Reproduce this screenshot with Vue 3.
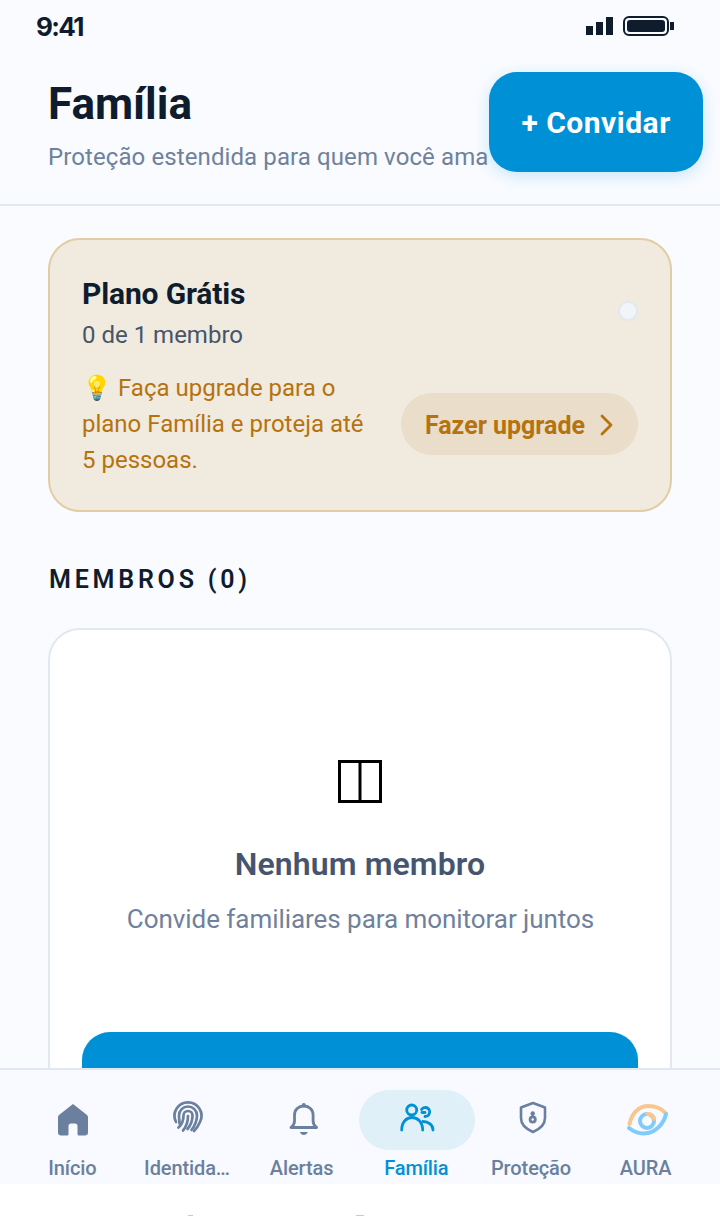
<script setup>
const navItems = [
  { label: "Início", icon: "home" },
  { label: "Identida…", icon: "finger" },
  { label: "Alertas", icon: "bell" },
  { label: "Família", icon: "family", active: true },
  { label: "Proteção", icon: "shield" },
  { label: "AURA", icon: "aura" },
];
</script>

<template>
  <div class="screen">
    <div class="phone">
      <div class="status-bar">
        <span class="clock">9:41</span>
        <div class="status-icons">
          <svg width="28" height="18" viewBox="0 0 28 18" fill="#0f1c2e">
            <rect x="0" y="9" width="7" height="9" />
            <rect x="10" y="5" width="7" height="13" />
            <rect x="20" y="0" width="7" height="18" />
          </svg>
          <svg width="52" height="20" viewBox="0 0 52 20">
            <rect x="1" y="1" width="44" height="18" rx="5" fill="none" stroke="#0f1c2e" stroke-width="2" />
            <rect x="4" y="4" width="38" height="12" rx="3" fill="#0f1c2e" />
            <rect x="47" y="6" width="4" height="8" fill="#0f1c2e" />
          </svg>
        </div>
      </div>

      <header class="page-header">
        <div class="heading">
          <h1>Família</h1>
          <p>Proteção estendida para quem você ama</p>
        </div>
        <button type="button" class="invite">+ Convidar</button>
      </header>

      <main class="content">
        <section class="plan-card">
          <div class="plan-top">
            <div>
              <h2>Plano Grátis</h2>
              <p class="plan-count">0 de 1 membro</p>
            </div>
            <span class="plan-dot"></span>
          </div>
          <div class="plan-bottom">
            <p class="plan-hint">💡 Faça upgrade para o plano Família e proteja até 5 pessoas.</p>
            <button type="button" class="upgrade">
              Fazer upgrade
              <svg width="14" height="22" viewBox="0 0 14 22" fill="none" stroke="#b5730f" stroke-width="2.8" stroke-linecap="round" stroke-linejoin="round">
                <path d="M2 2l9 9-9 9" />
              </svg>
            </button>
          </div>
        </section>

        <h3 class="section-title">MEMBROS (0)</h3>

        <section class="empty-card">
          <svg class="tofu" width="44" height="43" viewBox="0 0 44 43" fill="none" stroke="#000" stroke-width="3">
            <rect x="1.5" y="1.5" width="41" height="40" />
            <path d="M22 1.5v40" />
          </svg>
          <h4>Nenhum membro</h4>
          <p>Convide familiares para monitorar juntos</p>
          <button type="button" class="cta"></button>
        </section>
      </main>

      <nav class="tab-bar">
        <div v-for="item in navItems" :key="item.label" class="tab" :class="{ active: item.active }">
          <span class="tab-icon">
            <svg v-if="item.icon === 'home'" width="36" height="36" viewBox="0 2 36 36" fill="#6b7f9e">
              <path d="M18 4 4 15c-.6.5-1 1.200-1 2v15.500c0 1.700 1.300 3 3 3h6c1 0 1.500-.7 1.500-1.500v-8c0-1.400 1-2.500 2.500-2.500h4c1.500 0 2.500 1.100 2.500 2.500v8c0 .8.500 1.500 1.500 1.500h6c1.700 0 3-1.300 3-3V17c0-.8-.4-1.500-1-2z" />
            </svg>
            <svg v-else-if="item.icon === 'finger'" width="36" height="36" viewBox="0 2 36 36" fill="none" stroke="#6b7f9e" stroke-width="2.700" stroke-linecap="round">
              <path d="M6 22A13.500 13.500 0 1 1 30 22c-1.500 3.500-3.500 6.500-6 9" />
              <path d="M9.500 23.500c0-2.500-.5-5-.5-8C9 10.500 13 6.500 18 6.500s9 4 9 9c0 4-2 10-5.500 14.500" />
              <path d="M8.500 27.500c3.500-3 5-7 5-12 0-2.500 2-4.500 4.500-4.500s4.500 2 4.500 4.500c0 5-2 10-5 13.500" />
              <path d="M13 30.500c3-3.500 5-8.500 5-14.500" />
            </svg>
            <svg v-else-if="item.icon === 'bell'" width="36" height="36" viewBox="0 2 36 36" fill="none" stroke="#6b7f9e" stroke-width="2.800" stroke-linecap="round" stroke-linejoin="round">
              <path d="M6 27.500c2.200-1.500 3.500-3 3.500-6.500v-6c0-5.500 4-9 9.300-9s9.300 3.500 9.300 9v6c0 3.500 1.300 5 3.500 6.500z" />
              <circle cx="18.800" cy="5" r="2" fill="#6b7f9e" stroke="none" />
              <path d="M14.800 32h8c-.8 2-2.300 3-4 3s-3.200-1-4-3z" fill="#6b7f9e" stroke="none" />
            </svg>
            <svg v-else-if="item.icon === 'family'" width="36" height="36" viewBox="0 2 36 36" fill="none" stroke="#0090d6" stroke-width="2.800" stroke-linecap="round">
              <circle cx="12.700" cy="10" r="5" />
              <path d="M22.500 9.500A4.500 4.500 0 1 1 26 16.500" />
              <path d="M23 12.500h3" />
              <path d="M2.700 30C2.700 22 7.500 17.500 13 17.500S23.700 22 23.700 30" />
              <path d="M24 21.500C29.500 21.500 34 25 34 30" />
            </svg>
            <svg v-else-if="item.icon === 'shield'" width="36" height="36" viewBox="0 2 36 36" fill="none" stroke="#6b7f9e" stroke-width="2.600" stroke-linejoin="round">
              <path d="M19 3 31 7.500V18c0 6.500-5 11-12 14-7-3-12-7.500-12-14V7.500z" />
              <circle cx="18.700" cy="13.500" r="2.200" fill="#6b7f9e" stroke="none" />
              <path d="M18.700 14v3" stroke-width="2" />
              <circle cx="18.700" cy="19.500" r="4" fill="#6b7f9e" stroke="none" />
              <circle cx="18.700" cy="19.500" r="1.200" fill="#f8faff" stroke="none" />
            </svg>
            <svg v-else width="42" height="36" viewBox="0 2 42 36" fill="none" stroke-width="4" stroke-linecap="round">
              <path d="M3.500 24C6 12 14 6 22 6c8 0 14 3 17.500 7" stroke="#f8c78f" />
              <path d="M3 28c7 5.500 14 6 19 5 9-2 16-10 18-19" stroke="#7fcbfb" />
              <circle cx="21" cy="21" r="7" stroke="#7fcbfb" />
              <path d="M21.500 14c3.500 0 6 2 6.500 5" stroke="#f8c78f" />
            </svg>
          </span>
          <span class="tab-label">{{ item.label }}</span>
        </div>
      </nav>
    </div>
    <div class="under-bar">
      <i class="mark small"></i>
      <i class="mark wide"></i>
    </div>
  </div>
</template>

<style>
html,
body {
  margin: 0;
  background: #fff;
}
</style>

<style scoped>
.screen {
  width: 720px;
  height: 1216px;
  overflow: hidden;
  background: #fff;
  font-family: Roboto, "Liberation Sans", sans-serif;
}

.phone {
  height: 1184px;
  display: flex;
  flex-direction: column;
  background: #f9fbff;
}

.status-bar {
  height: 54px;
  flex: none;
  box-sizing: border-box;
  padding: 0 45px 2px 36px;
  display: flex;
  justify-content: space-between;
  align-items: center;
}

.clock {
  font: 700 26px "Inter", sans-serif;
  letter-spacing: -1.6px;
  color: #0f1c2e;
}

.status-icons {
  display: flex;
  align-items: center;
  gap: 9px;
}

.page-header {
  flex: none;
  height: 152px;
  box-sizing: border-box;
  border-bottom: 2px solid #e2e8f0;
  padding: 18px 17px 0 48px;
  display: flex;
  justify-content: space-between;
  align-items: flex-start;
}

.heading h1 {
  margin: 8px 0 0;
  font-size: 44px;
  line-height: 48px;
  font-weight: 700;
  color: #0f1c2e;
}

.heading p {
  margin: 13px 0 0;
  font-size: 24px;
  line-height: 32px;
  letter-spacing: 0.1px;
  color: #6f819c;
  white-space: nowrap;
}

.invite {
  flex: none;
  width: 214px;
  height: 100px;
  border: none;
  border-radius: 28px;
  background: #0090d6;
  color: #fff;
  font: 700 30px Roboto, sans-serif;
  letter-spacing: 0.5px;
  box-shadow: 0 4px 16px rgba(0, 144, 214, 0.2);
}

.content {
  flex: 1;
  min-height: 0;
  overflow: hidden;
  padding: 32px 48px 0;
}

.plan-card {
  box-sizing: border-box;
  height: 274px;
  border: 2px solid #e2cca4;
  border-radius: 32px;
  background: #f1eadf;
  padding: 32px;
}

.plan-top {
  display: flex;
  justify-content: space-between;
  align-items: center;
}

.plan-top h2 {
  margin: 0;
  font-size: 30px;
  line-height: 44px;
  font-weight: 700;
  letter-spacing: -0.15px;
  color: #0f1c2e;
}

.plan-count {
  margin: 3px 0 0;
  font-size: 24px;
  line-height: 32px;
  color: #475569;
}

.plan-dot {
  width: 20px;
  height: 20px;
  margin-bottom: 2px;
  box-sizing: border-box;
  border: 2px solid #e2e8f0;
  border-radius: 50%;
  background: #f1f5f9;
}

.plan-bottom {
  margin-top: 19px;
  display: flex;
  justify-content: space-between;
  align-items: center;
}

.plan-hint {
  margin: 0;
  width: 300px;
  font-size: 24px;
  line-height: 36px;
  color: #b5730f;
}

.upgrade {
  width: 237px;
  height: 62px;
  border: none;
  border-radius: 31px;
  background: #eaddc9;
  color: #b5730f;
  font: 700 25px Roboto, sans-serif;
  display: flex;
  align-items: center;
  justify-content: center;
  gap: 15px;
  padding: 2px 0 0;
}

.section-title {
  margin: 51px 0 31px 1px;
  font-size: 25px;
  line-height: 34px;
  font-weight: 600;
  letter-spacing: 3.8px;
  color: #0f1c2e;
}

.empty-card {
  box-sizing: border-box;
  height: 600px;
  border: 2px solid #e2e8f0;
  border-radius: 32px;
  background: #fff;
  padding: 130px 32px 0;
  display: flex;
  flex-direction: column;
  align-items: center;
}

.tofu {
  display: block;
}

.empty-card h4 {
  margin: 41px 0 0;
  font-size: 32px;
  line-height: 40px;
  font-weight: 600;
  letter-spacing: 0.1px;
  color: #46556f;
}

.empty-card p {
  margin: 18px 0 0 1px;
  font-size: 26px;
  line-height: 34px;
  letter-spacing: -0.05px;
  color: #6f819c;
}

.cta {
  margin-top: 96px;
  width: 100%;
  height: 100px;
  flex: none;
  border: none;
  border-radius: 28px;
  background: #0090d6;
}

.tab-bar {
  flex: none;
  position: relative;
  height: 116px;
  box-sizing: border-box;
  border-top: 2px solid #e2e8f0;
  background: #f8faff;
  padding: 20px 16px 0;
  display: grid;
  grid-template-columns: repeat(6, 1fr);
}

.tab {
  display: flex;
  flex-direction: column;
  align-items: center;
  min-width: 0;
}

.tab-icon {
  flex: none;
  width: 116px;
  height: 60px;
  border-radius: 30px;
  display: flex;
  align-items: center;
  justify-content: center;
}

.tab-icon svg {
  overflow: visible;
}

.tab.active .tab-icon {
  background: #dff0f9;
}

.tab-label {
  margin: 4px 2px 0 0;
  font-size: 20px;
  line-height: 28px;
  font-weight: 500;
  letter-spacing: -0.1px;
  white-space: nowrap;
  color: #6b7f9e;
}

.tab.active .tab-label {
  color: #0090d6;
}

.under-bar {
  height: 32px;
  display: flex;
  align-items: flex-end;
  padding-left: 188px;
  gap: 163px;
}

.mark {
  height: 1px;
  background: #c9c9c9;
}

.mark.small {
  width: 5px;
}

.mark.wide {
  width: 8px;
}
</style>
